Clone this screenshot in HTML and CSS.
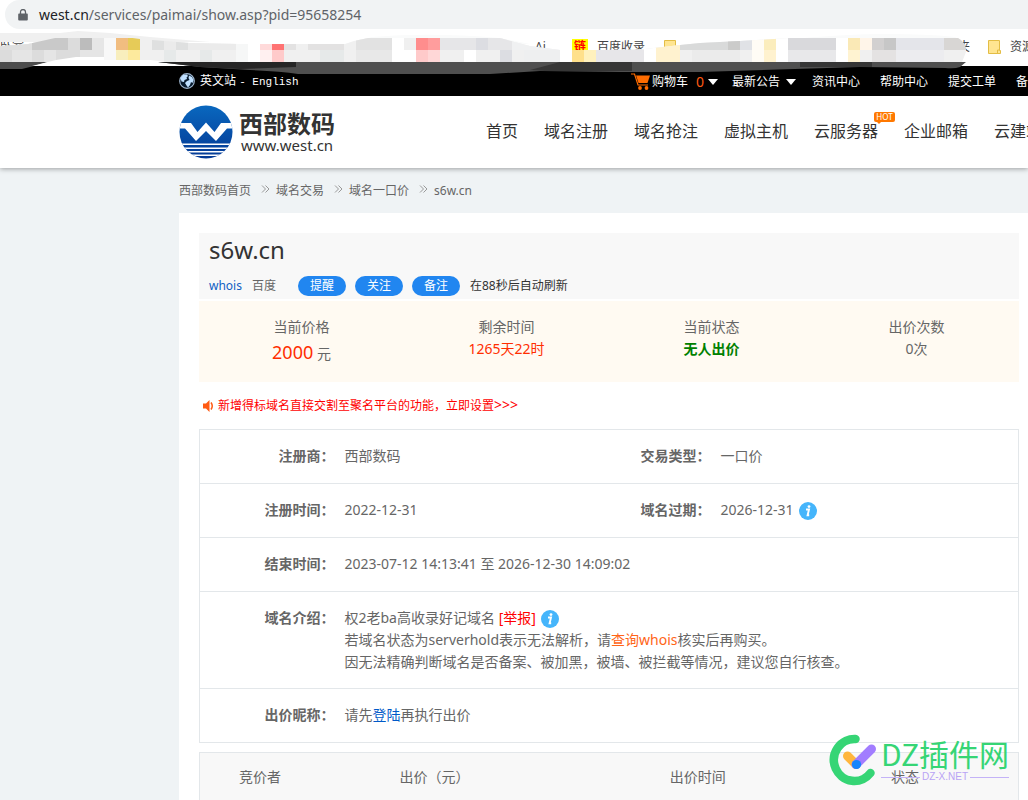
FILE: index.html
```
<!DOCTYPE html>
<html lang="zh-CN">
<head>
<meta charset="utf-8">
<title>s6w.cn - 域名一口价 - 西部数码</title>
<link rel="stylesheet" href="styles.css">
</head>
<body>
<div class="browser">
  <div class="address">
    <svg class="lock" viewBox="0 0 10 12"><path d="M1 4.6h8a.8.8 0 0 1 .8.8v5.2a.9.9 0 0 1-.9.9H1.1a.9.9 0 0 1-.9-.9V5.400a.8.8 0 0 1 .8-.8z" fill="#5f6368"/><path d="M2.500 5V3a2.500 2.500 0 0 1 5 0v2" fill="none" stroke="#5f6368" stroke-width="1.300"/></svg>
    <span class="url"><b>west.cn</b>/services/paimai/show.asp?pid=95658254</span>
  </div>
  <div class="bookmarks">
    <span class="mark-first">卧室</span>
    <span class="mark-ai">Ai</span>
    <span class="mark-chain">链</span><span class="mark-baidu">百度收录</span>
    <svg class="folder" viewBox="0 0 13 14"><path d="M.5.5h11v10h1v3H.5z" fill="#ffe591" stroke="#e3bd45"/></svg>
    <svg class="folder folder-next" viewBox="0 0 13 14"><path d="M.5.5h11v10h1v3H.5z" fill="#ffe591" stroke="#e3bd45"/></svg>
    <span class="mark-end">
      <span class="mark-clip">夹</span>
      <svg class="folder" viewBox="0 0 13 14"><path d="M.5.5h11v10h1v3H.5z" fill="#ffe591" stroke="#e3bd45"/><path d="M9.500 13v-3h2" fill="none" stroke="#e3bd45"/></svg>
      <span>资源</span>
    </span>
  </div>
  <svg class="mosaic" viewBox="0 0 1028 48">
    <defs><clipPath id="smear"><path d="M0 16L28 14L55 8L78 5L110 5L140 9L190 13L240 14L345 14Q356 10 368 8L500 8L530 16L560 20L600 20L645 19L680 15L700 13L740 11L790 8H958Q966 12 966 22L962 32H0z"/></clipPath></defs>
    <path d="M0 3H60L78 1L110 3L150 7L210 12H0z" fill="#f0f0f0"/>
    <path d="M345 14L372 7Q430 2 500 8L530 14zM784 10Q880 0 955 7L962 12z" fill="#fafbfb"/>
    <g clip-path="url(#smear)" shape-rendering="crispEdges">
      <path d="M0 0H1028V34H0z" fill="#f0f0f0"/>
      <path d="M0 8h32v12H0z" fill="#dfdfdf"/><path d="M32 8h36v12H32z" fill="#c9c9c9"/><path d="M68 8h12v12H68z" fill="#dcdcdc"/><path d="M80 8h12v12H80z" fill="#bcbcbc"/><path d="M92 8h12v12H92z" fill="#e6e6e6"/><path d="M104 8h12v24h-12z" fill="#f8f8f8"/>
      <path d="M116 8h12v12h-12z" fill="#f1bd80"/><path d="M128 8h12v12h-12z" fill="#e6cb58"/><path d="M116 20h12v12h-12z" fill="#f8eebd"/><path d="M128 20h12v12h-12z" fill="#fdea9d"/>
      <path d="M152 8h12v12h-12zM176 8h12v12h-12z" fill="#dfe0e0"/><path d="M164 8h12v12h-12zM188 8h48v12h-48z" fill="#ebebeb"/><path d="M248 0h12v34h-12z" fill="#fff"/><path d="M236 8h12v24h-12z" fill="#f6f7f7"/>
      <path d="M0 20h12v12H0zM32 20h12v12H32zM56 20h24v12H56z" fill="#dcdcdc"/><path d="M12 20h20v12H12zM44 20h12v12H44zM80 20h24v12H80z" fill="#e5e5e5"/><path d="M164 20h12v12h-12zM200 20h12v12h-12z" fill="#e6e9e9"/>
      <path d="M260 8h12v12h-12z" fill="#ffdada"/><path d="M272 8h12v12h-12z" fill="#ff7272"/><path d="M260 20h12v12h-12z" fill="#fff0f0"/><path d="M272 20h12v12h-12z" fill="#ffcaca"/>
      <path d="M284 8h12v12h-12zM308 8h36v12h-36z" fill="#e3e2e2"/><path d="M320 20h24v12h-24z" fill="#e6e9e9"/><path d="M356 8h36v12h-36z" fill="#e2e2e2"/><path d="M356 20h36v12h-36z" fill="#e8e8e8"/><path d="M392 8h12v24h-12zM404 20h12v12h-12z" fill="#fff"/>
      <path d="M416 8h12v12h-12z" fill="#ff8d8d"/><path d="M428 8h12v12h-12z" fill="#ff9d9d"/><path d="M416 20h12v12h-12z" fill="#ffcaca"/><path d="M428 20h12v12h-12z" fill="#ffd7d7"/>
      <path d="M440 8h72v12h-72z" fill="#e6e6e8"/><path d="M476 8h12v12h-12zM500 20h12v12h-12z" fill="#dcdde2"/><path d="M464 20h12v12h-12z" fill="#fff"/><path d="M512 8h60v12h-60z" fill="#f0f1f2"/><path d="M524 20h36v12h-36z" fill="#eeeff0"/><path d="M560 16h12v16h-12z" fill="#fff"/>
      <path d="M572 20h12v12h-12z" fill="#ffe08b"/><path d="M584 20h12v12h-12z" fill="#fff1bd"/><path d="M596 20h48v12h-48z" fill="#e7e6e9"/><path d="M644 8h12v24h-12z" fill="#fff"/><path d="M656 14h24v18h-24z" fill="#fff2cf"/>
      <path d="M680 8h60v12h-60z" fill="#d9dada"/><path d="M728 8h12v12h-12z" fill="#cbcbca"/><path d="M740 8h12v12h-12z" fill="#e0e2e6"/><path d="M692 20h48v12h-48z" fill="#ebebeb"/><path d="M752 8h12v24h-12z" fill="#fffcf5"/><path d="M764 8h12v12h-12z" fill="#fbedbd"/><path d="M764 20h12v12h-12z" fill="#fff2cf"/><path d="M776 8h12v24h-12z" fill="#fff"/>
      <path d="M788 8h48v12h-48z" fill="#d9d9dc"/><path d="M788 20h48v12h-48z" fill="#e8e8ea"/><path d="M836 8h12v24h-12z" fill="#fff"/><path d="M848 8h12v12h-12z" fill="#fae9b6"/><path d="M860 8h12v12h-12z" fill="#fff5e9"/><path d="M848 20h12v12h-12z" fill="#fff3d1"/>
      <path d="M872 8h12v12h-12z" fill="#d2d0d0"/><path d="M884 8h12v12h-12z" fill="#c7c7c7"/><path d="M896 8h48v12h-48z" fill="#e4e5ea"/><path d="M944 8h24v12h-24z" fill="#d8d6d4"/><path d="M872 20h24v12h-24z" fill="#e4e2e2"/><path d="M896 20h48v12h-48z" fill="#ececef"/>
    </g>
    <path d="M0 32H48L34 36L22 39H0z" fill="#4c4c4c"/>
    <path d="M32 36L56 30L76 27H104V30H150L200 36z" fill="#fff"/>
    <path d="M158 32H966L960 37Q955 39 945 38L860 37L700 42L620 42L540 41L490 44H298Q280 41 250 40L200 37z" fill="#4f4f4f"/>
    <path d="M158 32H296V37L240 39L200 37z" fill="#262626"/>
    <path d="M530 40L560 32H632V41H545zM800 32H872V37H800z" fill="#363636"/>
  </svg>
</div>

<div class="topbar">
  <a class="english" href="#">
    <svg viewBox="0 0 16 16"><circle cx="8" cy="8" r="7.300" fill="#071a2e" stroke="#9fb6cf" stroke-width="1.200"/><path d="M1.500 5L4 2L8 1.500L9 3L7.500 4.500L8 6L5.500 7L5 9L2.500 8.500zM10 2.500L13 4L14.500 7L13.500 10L12 9L11 12L9 14.500L7.500 12.500L6 10L8 8L10.500 7L9.500 5z" fill="#bfe0ff"/></svg>
    <span>英文站 <span class="mono">- English</span></span>
  </a>
  <nav class="toplinks">
    <a class="cart" href="#"><svg viewBox="0 0 19 18"><path d="M0 1h3.500l3.500 11H17" fill="none" stroke="#ff6c00" stroke-width="1.200"/><path d="M5 2.500h14l-2.500 7.500H7.500z" fill="#ff6c00"/><circle cx="9" cy="15" r="1.900" fill="#ff6c00"/><circle cx="15.500" cy="15" r="1.900" fill="#ff6c00"/></svg><span>购物车</span><em>0</em><i class="caret"></i></a>
    <a class="news" href="#">最新公告<i class="caret"></i></a>
    <a href="#">资讯中心</a><a href="#">帮助中心</a><a href="#">提交工单</a><a href="#">备案</a>
  </nav>
</div>

<header class="header">
  <a class="brand" href="#">
    <svg viewBox="0 0 54 54">
      <defs><linearGradient id="blue" x2="0" y2="1"><stop offset="0" stop-color="#0968bf"/><stop offset="1" stop-color="#053994"/></linearGradient><clipPath id="disc"><circle cx="27" cy="27" r="26.500"/></clipPath></defs>
      <g clip-path="url(#disc)"><path d="M0 0H54V54H0z" fill="url(#blue)"/><path d="M0 18H12L18.500 27L27 17.500L35.500 27L42 18H54V23.500H48L37 36L27 26L17 36L6 23.500H0z" fill="#fff"/><path d="M0 38.500H54V40H0zM0 42.500H54V44H0zM0 46H54V47.500H0zM0 49.500H54V51H0z" fill="#fff"/></g>
    </svg>
    <span class="brand-text"><strong>西部数码</strong><span>www.west.cn</span></span>
  </a>
  <nav class="nav">
    <a href="#">首页</a><a href="#">域名注册</a><a href="#">域名抢注</a><a href="#">虚拟主机</a><a class="hot" href="#">云服务器<small>HOT</small></a><a href="#">企业邮箱</a><a href="#">云建站</a>
  </nav>
</header>

<div class="crumbs">
  <a href="#">西部数码首页</a><svg viewBox="0 0 8 8"><path d="M.5.5L4 4L.5 7.500M4 .5L7.500 4L4 7.500" /></svg><a href="#">域名交易</a><svg viewBox="0 0 8 8"><path d="M.5.5L4 4L.5 7.500M4 .5L7.500 4L4 7.500" /></svg><a href="#">域名一口价</a><svg viewBox="0 0 8 8"><path d="M.5.5L4 4L.5 7.500M4 .5L7.500 4L4 7.500" /></svg><span>s6w.cn</span>
</div>

<main class="content">
  <section class="domain">
    <h1>s6w.cn</h1>
    <div class="tools">
      <a class="whois" href="#">whois</a><a class="baidu" href="#">百度</a>
      <div class="buttons"><button type="button">提醒</button><button type="button">关注</button><button type="button">备注</button></div>
      <span class="refresh">在88秒后自动刷新</span>
    </div>
  </section>
  <section class="stats">
    <div><span>当前价格</span><span class="price"><b>2000</b> 元</span></div>
    <div><span>剩余时间</span><span class="left">1265天22时</span></div>
    <div><span>当前状态</span><strong>无人出价</strong></div>
    <div><span>出价次数</span><span>0次</span></div>
  </section>
  <a class="notice" href="#">
    <svg viewBox="0 0 12 12"><path d="M0 3.500h3L6.500 0v12L3 8.500H0z" fill="#ff5a12"/><path d="M8 2.500Q10.500 6 8 9.500" fill="none" stroke="#ff5a12" stroke-width="1.500"/></svg>
    <span>新增得标域名直接交割至聚名平台的功能，立即设置<span class="more">&gt;&gt;&gt;</span></span>
  </a>
  <table class="info">
    <colgroup><col class="c-label"><col class="c-value"><col class="c-label"><col></colgroup>
    <tr><th>注册商：</th><td>西部数码</td><th>交易类型：</th><td>一口价</td></tr>
    <tr><th>注册时间：</th><td>2022-12-31</td><th>域名过期：</th><td>2026-12-31 <svg class="tip" viewBox="0 0 18 18"><circle cx="9" cy="9" r="9" fill="#45b5fb"/><circle cx="10" cy="4.600" r="1.400" fill="#fff"/><path d="M7 7.500h3L8.600 13.200h1.600" fill="none" stroke="#fff" stroke-width="1.900"/></svg></td></tr>
    <tr><th>结束时间：</th><td colspan="3">2023-07-12 14:13:41 至 2026-12-30 14:09:02</td></tr>
    <tr class="intro"><th>域名介绍：</th><td colspan="3">权2老ba高收录好记域名 <a class="report" href="#">[举报]</a> <svg class="tip" viewBox="0 0 18 18"><circle cx="9" cy="9" r="9" fill="#45b5fb"/><circle cx="10" cy="4.600" r="1.400" fill="#fff"/><path d="M7 7.500h3L8.600 13.200h1.600" fill="none" stroke="#fff" stroke-width="1.900"/></svg><br>若域名状态为serverhold表示无法解析，请<a class="query" href="#">查询whois</a>核实后再购买。<br>因无法精确判断域名是否备案、被加黑，被墙、被拦截等情况，建议您自行核查。</td></tr>
    <tr><th>出价昵称：</th><td colspan="3">请先<a class="login" href="#">登陆</a>再执行出价</td></tr>
  </table>
  <div class="bids">
    <table>
      <tr><th class="b-who">竞价者</th><th class="b-price">出价（元）</th><th class="b-time">出价时间</th><th>状态</th></tr>
    </table>
    <div class="watermark">
      <svg viewBox="0 0 48 52"><path d="M26.500 5A20.500 21 0 1 0 41.500 39" fill="none" stroke="#36d575" stroke-width="8.500" stroke-linecap="round"/><path d="M18.500 22L27 30.500" stroke="#ffb63d" stroke-width="9" stroke-linecap="round"/><path d="M27 30.500L42.500 15" stroke="#a27dff" stroke-width="9" stroke-linecap="round"/><circle cx="27.500" cy="30.500" r="4.600" fill="#1685fc"/></svg>
      <div class="wm-text"><span class="wm-name">DZ插件网</span><span class="wm-sub">DZ-X.NET</span></div>
    </div>
  </div>
</main>
</body>
</html>
```
FILE: styles.css
```
* { box-sizing: border-box; }
body {
  margin: 0;
  background: #eff3f5;
  color: #666;
  font: 14px/22px "Noto Sans", "Noto Sans CJK SC", sans-serif;
}
a { color: inherit; text-decoration: none; }
svg { display: block; flex: none; }

.browser { position: relative; height: 66px; background: #fff; }
.address {
  display: flex;
  align-items: center;
  gap: 11px;
  height: 29px;
  margin-left: 5px;
  padding-left: 13px;
  background: #f1f3f4;
  border-radius: 15px 0 0 15px;
}
.lock { width: 10px; height: 12px; }
.url { color: #5f6368; font-size: 14px; }
.url b { color: #202124; font-weight: 400; }
.bookmarks {
  display: flex;
  align-items: center;
  height: 36px;
  font-size: 12px;
  color: #444;
  white-space: nowrap;
  overflow: hidden;
}
.mark-first { width: 535px; }
.mark-ai { width: 37px; }
.mark-chain { background: #ff0; color: #f00; font-weight: 700; width: 16px; line-height: 16px; text-align: center; }
.mark-baidu { width: 76px; padding-left: 9px; }
.mark-end { display: flex; gap: 9px; align-items: center; margin-left: auto; margin-right: -6px; }
.mark-clip { margin-right: 9px; }
.folder { width: 13px; height: 14px; }
.folder-next { margin-left: 86px; }
.mosaic { position: absolute; left: 0; top: 30px; width: 1028px; height: 48px; z-index: 1; }

.topbar {
  display: flex;
  align-items: center;
  height: 30px;
  padding-left: 179px;
  background: #000;
  color: #fff;
  font-size: 12px;
  white-space: nowrap;
  overflow: hidden;
}
.english { display: flex; align-items: center; gap: 5px; width: 452px; flex: none; }
.english svg { width: 16px; height: 16px; }
.mono { font-family: "Liberation Mono", monospace; font-size: 11px; }
.toplinks { display: flex; gap: 20px; padding-top: 1px; }
.cart, .news { display: flex; align-items: center; }
.cart svg { width: 19px; height: 18px; margin-right: 2px; }
.cart em { margin-left: 8px; color: #ff5a12; font-style: normal; font-size: 14px; }
.cart { margin-right: -6px; }
.news { margin-right: -4px; }
.caret { margin-left: 4px; border: 5px solid transparent; border-top: 6px solid #fff; border-bottom: 0; }
.news .caret { margin-left: 6px; }

.header {
  position: relative;
  display: flex;
  align-items: center;
  height: 72px;
  padding-left: 179px;
  background: #fff;
  box-shadow: 0 1px 5px rgba(0, 0, 0, .35);
  white-space: nowrap;
  overflow-x: clip;
}
.brand { display: flex; align-items: center; gap: 6px; width: 307px; flex: none; }
.brand svg { width: 54px; height: 54px; }
.brand-text { display: flex; flex-direction: column; color: #333; line-height: 16px; }
.brand-text strong { font-size: 24px; line-height: 26px; font-weight: 700; }
.brand-text span { padding-left: 2px; font-size: 15px; }
.nav { display: flex; gap: 26px; padding-bottom: 3px; color: #333; font-size: 16px; }
.hot { position: relative; }
.hot small {
  position: absolute;
  left: 60px;
  top: -8px;
  width: 21px;
  border-radius: 2px;
  background: #ff7800;
  color: #fff;
  font: 8px/10px "Noto Sans", sans-serif;
  text-align: center;
}
.hot small::after { content: ""; position: absolute; left: 3px; top: 10px; border: 2px solid transparent; border-top-color: #ff7800; }

.crumbs { display: flex; align-items: center; height: 45px; padding-left: 179px; font-size: 12px; }
.crumbs svg { width: 9px; height: 8px; margin: 0 6px 3px 10px; fill: none; stroke: #999; }

.content { margin-left: 179px; min-height: 587px; padding: 20px 9px 0 20px; background: #fff; }
.domain { height: 66px; padding: 0 10px; background: #f8f8f8; }
.domain h1 { margin: 0; color: #333; font-size: 24px; line-height: 34px; font-weight: 400; }
.tools { display: flex; align-items: center; height: 38px; font-size: 12px; white-space: nowrap; }
.whois { color: #0f5fc4; margin-right: 10px; }
.buttons { display: flex; gap: 9px; margin: 0 10px 0 22px; }
.buttons button {
  width: 48px;
  height: 20px;
  padding: 0;
  border: 0;
  border-radius: 10px;
  background: #2186f0;
  color: #fff;
  font: 12px/20px "Noto Sans", "Noto Sans CJK SC", sans-serif;
}
.refresh { color: #333; }

.stats { display: grid; grid-template-columns: repeat(4, 1fr); height: 81px; margin-top: 2px; padding-top: 15px; background: #fffaf2; text-align: center; }
.stats div { display: flex; flex-direction: column; }
.stats strong { color: #008000; }
.price { line-height: 28px; }
.price b { color: #ff2e00; font-size: 18px; font-weight: 400; }
.left { color: #ff2e00; }
.notice { display: flex; align-items: center; gap: 3px; height: 47px; padding-left: 4px; color: #f00; font-size: 12px; }
.notice svg { width: 12px; height: 12px; }
.more { font-size: 14px; }

table { width: 100%; border-collapse: collapse; table-layout: fixed; border: 1px solid #e3e7ea; }
.c-label { width: 145px; }
.c-value { width: 231px; }
.info tr { border-top: 1px solid #e3e7ea; }
.info th, .info td { padding: 15px 0 16px; vertical-align: top; text-align: left; }
.info .intro th, .info .intro td { padding: 15px 0; }
.info th { padding-right: 10px; text-align: right; }
.info tr th:first-child { padding-right: 10px; }
.tip { display: inline-block; width: 18px; height: 18px; margin: -2px 0 -2px 2px; vertical-align: middle; }
.report { color: #f00; }
.query { color: #ff6517; }
.login { color: #0059c8; }

.bids { position: relative; margin-top: 9px; }
.bids table { background: #f8f8f8; }
.bids th { padding: 13px 0 14px 40px; text-align: left; font-weight: 400; }
.bids .b-who { width: 160px; padding-left: 39px; }
.b-price { width: 33%; }
.b-time { width: 27%; }
.watermark { position: absolute; right: 10px; top: -18px; display: flex; gap: 4px; pointer-events: none; }
.watermark svg { width: 48px; height: 52px; }
.wm-text { display: flex; flex-direction: column; }
.wm-name { color: #36d575; font-size: 30px; line-height: 38px; font-weight: 400; font-family: "Noto Sans CJK SC", sans-serif; }
.wm-sub { display: flex; align-items: center; gap: 2px; color: #b9a3f5; font: 10px/10px "Liberation Sans", sans-serif; }
.wm-sub::before, .wm-sub::after { content: ""; flex: 1; height: 1px; background: #c4b3f7; }
```
